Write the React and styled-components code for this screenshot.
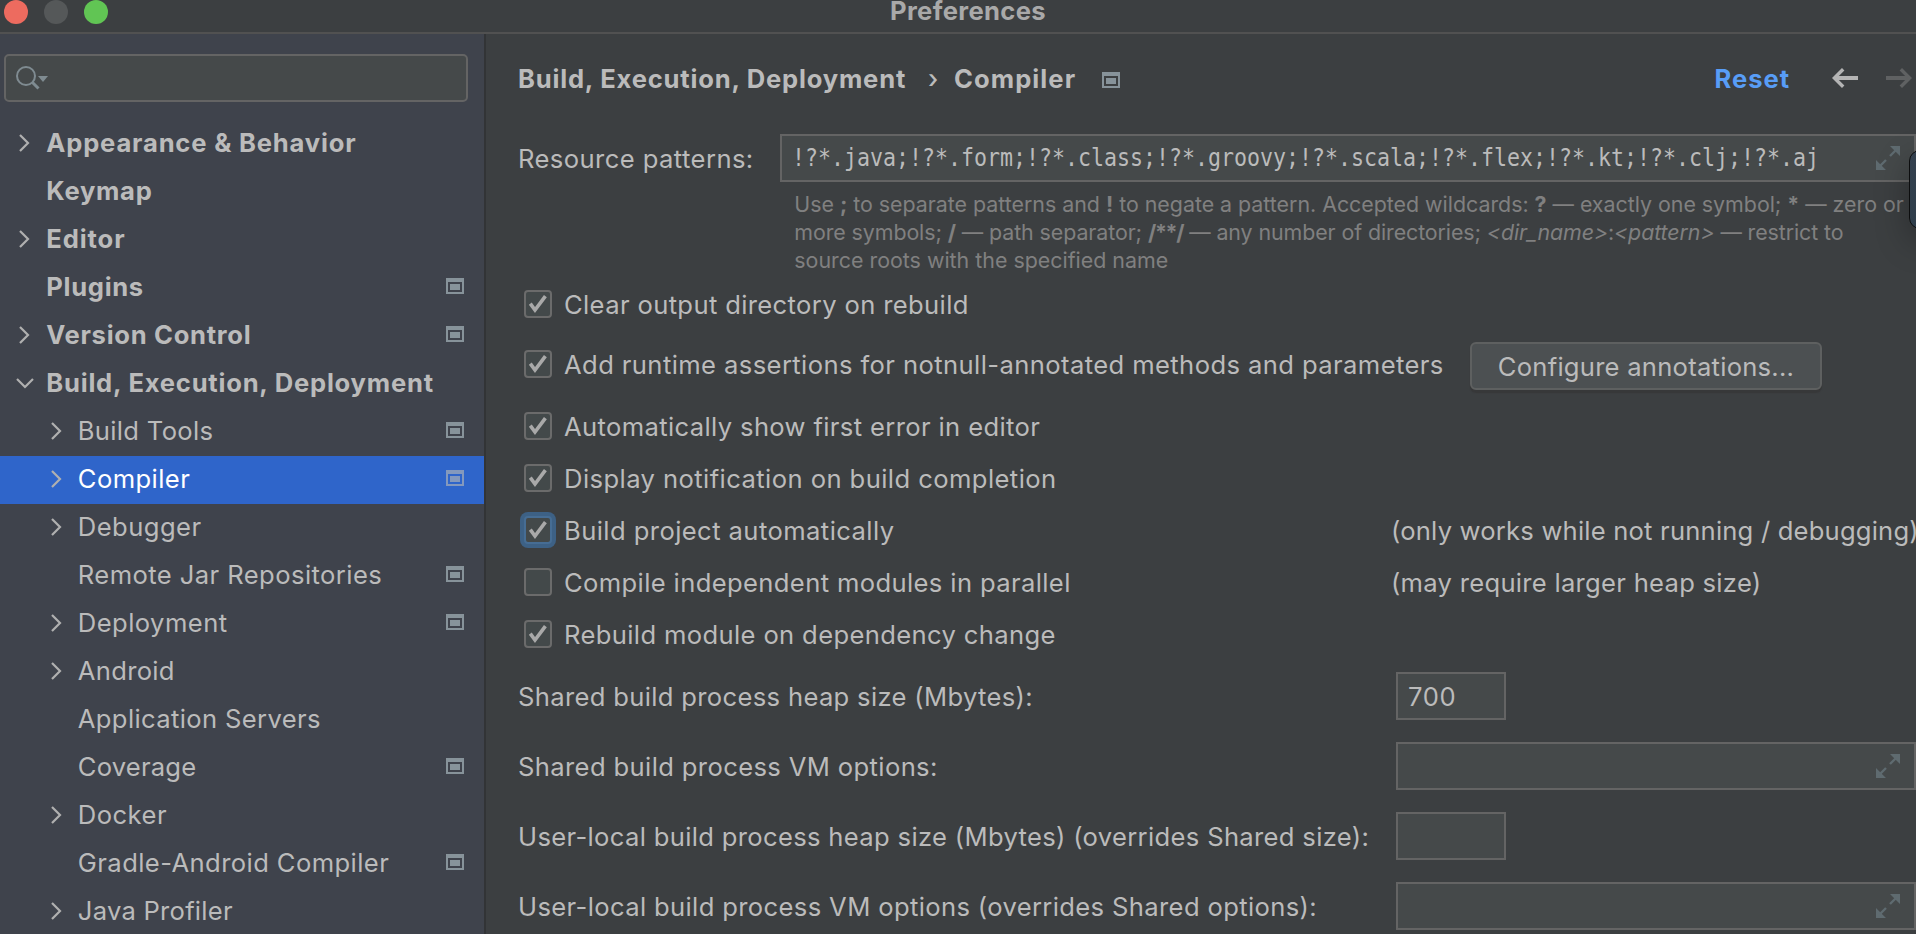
import React from "react";
import styled, { createGlobalStyle, css } from "styled-components";

const color = {
  window: "#3c3f41",
  sidebar: "#3f434c",
  field: "#45494a",
  line: "#646464",
  text: "#bbbbbb",
  hint: "#808080",
  icon: "#87939a",
  selection: "#2f65ca",
  link: "#589df6",
};

const GlobalStyle = createGlobalStyle`
  * { box-sizing: border-box; }
  html, body { margin: 0; height: 100%; overflow: hidden; background: ${color.window}; }
  #root { height: 100%; }
`;

const Window = styled.div`
  position: relative;
  display: flex;
  flex-direction: column;
  width: 100%;
  height: 100vh;
  overflow: hidden;
  background: ${color.window};
  color: ${color.text};
  font-family: Inter, "Liberation Sans", sans-serif;
  font-size: 25.6px;
  font-weight: 430;
  line-height: 30px;
  white-space: nowrap;
`;

const Label = styled.span`
  letter-spacing: ${(p) => p.$ls ?? 0.4}px;
`;

/* Title bar */

const TitleBar = styled.header`
  display: flex;
  flex: none;
  height: 34px;
  padding-left: 4px;
  border-bottom: 2px solid #515151;
`;

const TrafficLights = styled.div`
  display: flex;
  gap: 16px;
  width: 886px;
`;

const Light = styled.span`
  width: 24px;
  height: 24px;
  border-radius: 50%;
  background: ${(p) => p.$fill};
`;

const Title = styled.h1`
  margin: 0;
  font-size: 25.6px;
  font-weight: 700;
  line-height: 22px;
  letter-spacing: 0.35px;
  color: #a9a9a9;
`;

const Body = styled.div`
  display: flex;
  flex: 1;
  min-height: 0;
`;

/* Sidebar */

const Sidebar = styled.nav`
  flex: none;
  width: 486px;
  padding-top: 20px;
  overflow: hidden;
  background: ${color.sidebar};
  border-right: 2px solid #323436;
`;

const SearchBox = styled.div`
  display: flex;
  align-items: center;
  width: 464px;
  height: 48px;
  margin: 0 0 18px 4px;
  padding-left: 10px;
  background: ${color.field};
  border: 2px solid ${color.line};
  border-radius: 5px;
`;

const TreeRow = styled.div`
  display: flex;
  align-items: center;
  height: 48px;
  padding: 0 20px 2px ${(p) => (p.$child ? 45.8 : 14.3)}px;
  ${(p) =>
    !p.$child &&
    css`
      font-weight: 700;
    `}
  ${(p) =>
    p.$selected &&
    css`
      background: ${color.selection};
      color: #ffffff;
    `}
`;

const Twisty = styled.span`
  display: flex;
  flex: none;
  width: 32px;
`;

const RowEnd = styled.span`
  display: flex;
  margin-left: auto;
  margin-top: -2px;
`;

/* Settings page */

const Page = styled.main`
  flex: 1;
  min-width: 0;
  padding-left: 32px;
  overflow: hidden;
`;

const PageHeader = styled.div`
  display: flex;
  align-items: center;
  height: 90px;
  margin-bottom: 10px;
  padding-right: 4px;
  font-weight: 700;
`;

const CrumbSeparator = styled.span`
  width: 48px;
  padding-left: 22px;
  font-weight: 500;
`;

const HeaderIcon = styled.span`
  display: flex;
  margin: 2px 0 0 26px;
`;

const HeaderActions = styled.div`
  display: flex;
  align-items: center;
  margin-left: auto;
`;

const ResetLink = styled.a`
  margin-right: 42px;
  letter-spacing: 0.95px;
  color: ${color.link};
`;

const NavArrows = styled.span`
  display: flex;
  gap: 28px;
  margin-top: -2px;
`;

const PatternRow = styled.div`
  display: flex;
  align-items: center;
  height: 48px;
`;

const PatternLabel = styled.div`
  width: 262px;
  padding-top: 2px;
`;

const Field = styled.div`
  display: flex;
  align-items: center;
  justify-content: space-between;
  flex: ${(p) => (p.$width ? "none" : 1)};
  width: ${(p) => (p.$width ? `${p.$width}px` : "auto")};
  height: 48px;
  padding: 0 14px 0 10px;
  background: ${color.field};
  border: 2px solid ${color.line};
`;

const PatternText = styled.span`
  width: 1027px;
  font-family: "DejaVu Sans Mono", monospace;
  font-size: 24.5px;
  line-height: 44px;
  transform: scaleX(0.8814);
  transform-origin: left;
`;

const ExpandSlot = styled.span`
  display: flex;
  margin-left: auto;
`;

const Hint = styled.div`
  margin: 8px 0 4px 276.3px;
  font-size: 21.4px;
  font-weight: 400;
  line-height: 28px;
  color: ${color.hint};
`;

const HintLine = styled.div`
  letter-spacing: ${(p) => p.$ls}px;
`;

const Wildcard = styled.b`
  letter-spacing: -1.3px;
`;

const OptionRow = styled.div`
  display: flex;
  align-items: flex-start;
  height: ${(p) => (p.$tall ? 70 : 52)}px;
  padding-top: 12px;
`;

const Option = styled.label`
  display: flex;
  align-items: center;
  flex: none;
  width: ${(p) => (p.$tall ? 952 : 873)}px;
  height: 28px;
  margin-top: ${(p) => (p.$tall ? 8 : 0)}px;
  padding-left: 6px;
`;

const Check = styled.span`
  display: flex;
  flex: none;
  width: 28px;
  height: 28px;
  margin-right: 12px;
  background: #43494a;
  border: 2px solid #6b6b6b;
  border-radius: 4px;
  ${(p) =>
    p.$focused &&
    css`
      border-color: #466d94;
      box-shadow: 0 0 0 4px #3d6185;
    `}
`;

const OptionText = styled(Label)`
  padding-top: 2px;
`;

const Note = styled(Label)`
  height: 28px;
`;

const Button = styled.button`
  width: 352px;
  height: 48px;
  padding: 2px 0 0;
  background: #4c5052;
  border: 2px solid #5e6060;
  border-radius: 6px;
  box-shadow: 0 3px 1px #373839;
  color: ${color.text};
  font: inherit;
  letter-spacing: 0.25px;
`;

const FieldRow = styled.div`
  display: flex;
  height: 70px;
  padding-top: 12px;
`;

const FieldLabel = styled(Label)`
  flex: none;
  width: 878px;
  padding-top: 10px;
`;

const FloatingPanel = styled.div`
  position: absolute;
  top: 150px;
  left: 1909px;
  width: 40px;
  height: 79px;
  background: linear-gradient(#34414f, #2f3e4b);
  border: 1px solid #0c0d0e;
  border-radius: 11px;
  box-shadow: 0 12px 34px rgba(0, 0, 0, 0.3);
`;

/* Icons */

function SearchIcon() {
  return (
    <svg width="34" height="26" viewBox="0 0 34 26" fill="none">
      <circle cx="10" cy="11" r="9" stroke="#7f8b91" strokeWidth="2" />
      <path d="M16.5 17.5L22.5 23.5" stroke="#7f8b91" strokeWidth="3" />
      <path d="M22 11H32L27 17Z" fill="#7f8b91" />
    </svg>
  );
}

function Chevron({ open }) {
  return (
    <svg width="22" height="22" viewBox="0 0 22 22" fill="none" stroke="#b0b0b0" strokeWidth="2.2">
      {open ? <path d="M3 7L11 15L19 7" /> : <path d="M6 3L14 11L6 19" />}
    </svg>
  );
}

function ProjectIcon({ faded }) {
  return (
    <svg width="18" height="16" viewBox="0 0 18 16" fill={faded ? "#8499bd" : color.icon}>
      <path fillRule="evenodd" d="M0 0H18V16H0ZM2 4V14H16V4Z" />
      <rect x="4" y="6" width="10" height="6" />
    </svg>
  );
}

function Arrow({ forward }) {
  return (
    <svg width="26" height="20" viewBox="0 0 26 20" fill="none" stroke={forward ? "#5f6162" : "#b4b4b4"}>
      <g transform={forward ? "translate(26 0) scale(-1 1)" : undefined}>
        <path d="M3 10H26" strokeWidth="4" />
        <path d="M11.2 1.2L2.4 10L11.2 18.8" strokeWidth="3.4" />
      </g>
    </svg>
  );
}

function ExpandIcon() {
  return (
    <svg width="24" height="24" viewBox="0 0 24 24" fill="#5f6b70" stroke="#5f6b70">
      <path stroke="none" d="M14 0H24V10ZM0 14V24H10Z" />
      <path strokeWidth="2.4" d="M14 10L20 4M10 14L4 20" />
    </svg>
  );
}

function CheckMark() {
  return (
    <svg width="24" height="24" viewBox="2 2 24 24" fill="none" stroke="#a9a9a9" strokeWidth="3.6">
      <path d="M6.3 13.6L11 20L21.4 6.2" />
    </svg>
  );
}

/* Data */

const tree = [
  { text: "Appearance & Behavior", arrow: "closed", ls: 0.81 },
  { text: "Keymap", ls: 0.72 },
  { text: "Editor", arrow: "closed", ls: 0.88 },
  { text: "Plugins", mark: true, ls: 0.68 },
  { text: "Version Control", arrow: "closed", mark: true, ls: 0.7 },
  { text: "Build, Execution, Deployment", arrow: "open", ls: 0.77 },
  { text: "Build Tools", child: true, arrow: "closed", mark: true, ls: 0.32 },
  { text: "Compiler", child: true, arrow: "closed", mark: true, selected: true, ls: 0.42 },
  { text: "Debugger", child: true, arrow: "closed", ls: 0.44 },
  { text: "Remote Jar Repositories", child: true, mark: true, ls: 0.42 },
  { text: "Deployment", child: true, arrow: "closed", mark: true, ls: 0.44 },
  { text: "Android", child: true, arrow: "closed", ls: 0.3 },
  { text: "Application Servers", child: true, ls: 0.36 },
  { text: "Coverage", child: true, mark: true, ls: 0.2 },
  { text: "Docker", child: true, arrow: "closed", ls: 0.45 },
  { text: "Gradle-Android Compiler", child: true, mark: true, ls: 0.41 },
  { text: "Java Profiler", child: true, arrow: "closed", ls: 0.25 },
];

const options = [
  { text: "Clear output directory on rebuild", checked: true, ls: 0.36 },
  {
    text: "Add runtime assertions for notnull-annotated methods and parameters",
    checked: true,
    action: "Configure annotations...",
    ls: 0.4,
  },
  { text: "Automatically show first error in editor", checked: true, ls: 0.36 },
  { text: "Display notification on build completion", checked: true, ls: 0.42 },
  {
    text: "Build project automatically",
    checked: true,
    focused: true,
    ls: 0.42,
    note: "(only works while not running / debugging)",
    noteLs: 0.2,
  },
  {
    text: "Compile independent modules in parallel",
    ls: 0.37,
    note: "(may require larger heap size)",
    noteLs: 0.28,
  },
  { text: "Rebuild module on dependency change", checked: true, ls: 0.36 },
];

const fields = [
  { text: "Shared build process heap size (Mbytes):", ls: 0.33, value: "700", width: 110 },
  { text: "Shared build process VM options:", ls: 0.37 },
  {
    text: "User-local build process heap size (Mbytes) (overrides Shared size):",
    ls: 0.33,
    value: "",
    width: 110,
  },
  { text: "User-local build process VM options (overrides Shared options):", ls: 0.36 },
];

export default function App() {
  return (
    <Window>
      <GlobalStyle />
      <TitleBar>
        <TrafficLights>
          <Light $fill="#ed6b5f" />
          <Light $fill="#555859" />
          <Light $fill="#61c554" />
        </TrafficLights>
        <Title>Preferences</Title>
      </TitleBar>
      <Body>
        <Sidebar>
          <SearchBox>
            <SearchIcon />
          </SearchBox>
          {tree.map((item) => (
            <TreeRow key={item.text} $child={item.child} $selected={item.selected}>
              <Twisty>{item.arrow && <Chevron open={item.arrow === "open"} />}</Twisty>
              <Label $ls={item.ls}>{item.text}</Label>
              {item.mark && (
                <RowEnd>
                  <ProjectIcon faded={item.selected} />
                </RowEnd>
              )}
            </TreeRow>
          ))}
        </Sidebar>
        <Page>
          <PageHeader>
            <Label $ls={0.79}>Build, Execution, Deployment</Label>
            <CrumbSeparator>›</CrumbSeparator>
            <Label $ls={1.05}>Compiler</Label>
            <HeaderIcon>
              <ProjectIcon />
            </HeaderIcon>
            <HeaderActions>
              <ResetLink>Reset</ResetLink>
              <NavArrows>
                <Arrow />
                <Arrow forward />
              </NavArrows>
            </HeaderActions>
          </PageHeader>
          <PatternRow>
            <PatternLabel>
              <Label $ls={0.42}>Resource patterns:</Label>
            </PatternLabel>
            <Field>
              <PatternText>
                !?*.java;!?*.form;!?*.class;!?*.groovy;!?*.scala;!?*.flex;!?*.kt;!?*.clj;!?*.aj
              </PatternText>
              <ExpandSlot>
                <ExpandIcon />
              </ExpandSlot>
            </Field>
          </PatternRow>
          <Hint>
            <HintLine $ls={-0.02}>
              Use <b>;</b> to separate patterns and <b>!</b> to negate a pattern. Accepted wildcards: <b>?</b> — exactly
              one symbol; <b>*</b> — zero or
            </HintLine>
            <HintLine $ls={-0.09}>
              more symbols; <b>/</b> — path separator; <Wildcard>/**/</Wildcard> — any number of directories;{" "}
              <i>&lt;dir_name&gt;</i>:<i>&lt;pattern&gt;</i> — restrict to
            </HintLine>
            <HintLine $ls={0}>source roots with the specified name</HintLine>
          </Hint>
          {options.map((item) => (
            <OptionRow key={item.text} $tall={!!item.action}>
              <Option $tall={!!item.action}>
                <Check $focused={item.focused}>{item.checked && <CheckMark />}</Check>
                <OptionText $ls={item.ls}>{item.text}</OptionText>
              </Option>
              {item.note && <Note $ls={item.noteLs}>{item.note}</Note>}
              {item.action && <Button>{item.action}</Button>}
            </OptionRow>
          ))}
          {fields.map((item) => (
            <FieldRow key={item.text}>
              <FieldLabel $ls={item.ls}>{item.text}</FieldLabel>
              <Field $width={item.width}>
                {item.width ? (
                  <OptionText $ls={0.6}>{item.value}</OptionText>
                ) : (
                  <ExpandSlot>
                    <ExpandIcon />
                  </ExpandSlot>
                )}
              </Field>
            </FieldRow>
          ))}
        </Page>
      </Body>
      <FloatingPanel />
    </Window>
  );
}
